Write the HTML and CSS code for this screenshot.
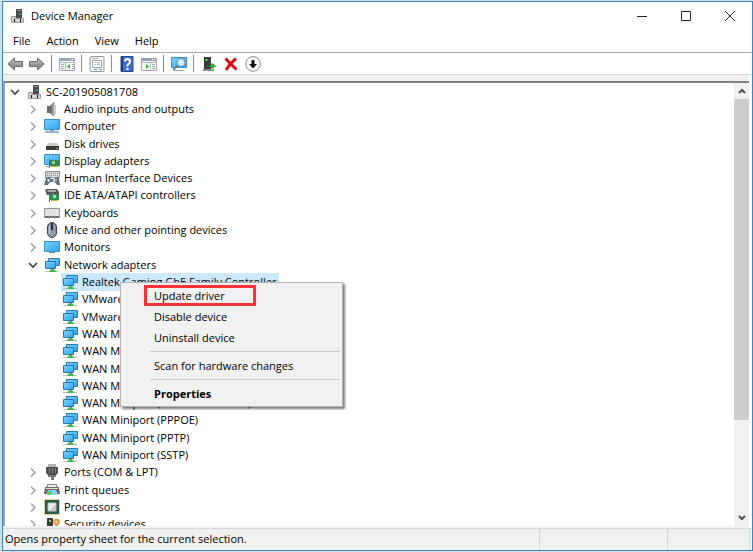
FILE: index.html
```
<!DOCTYPE html>
<html lang="en">
<head>
    <meta charset="UTF-8">
    <meta name="viewport" content="width=device-width, initial-scale=1.0">
    <title>Device Manager</title>
    <link rel="stylesheet" href="styles.css">
</head>
<body>
    <!-- Icon set -->
    <svg class="icon-set" aria-hidden="true">
        <defs>
            <linearGradient id="screen" x1="0" y1="0" x2="1" y2="1">
                <stop offset="0" stop-color="#7fd0ff"/>
                <stop offset="1" stop-color="#2ba3f0"/>
            </linearGradient>
            <linearGradient id="metal" x1="0" y1="0" x2="1" y2="0">
                <stop offset="0" stop-color="#555"/>
                <stop offset="1" stop-color="#bbb"/>
            </linearGradient>
        </defs>
        <symbol id="i-pc" viewBox="0 0 16 16">
            <path d="M7 1h6v9H7z" fill="#4a4a4a"/>
            <path d="M8 2h4v1H8z" fill="#999"/>
            <path d="M10 5h2v2h-2z" fill="#3a9a58"/>
            <path d="M2.500 8.500h4v2h8v4h-12z" fill="#d4d4d4" stroke="#9a9a9a"/>
            <path d="M5 11h1v3H5zM11 11h1v3h-1z" fill="#111"/>
        </symbol>
        <symbol id="i-audio" viewBox="0 0 16 16">
            <path d="M3 5h3v7H3z" fill="#666"/>
            <path d="M6 5l4-4v14l-4-3z" fill="url(#metal)" stroke="#777" stroke-width=".6"/>
            <path d="M11.500 4v9" stroke="#c8c8c8" fill="none"/>
        </symbol>
        <symbol id="i-computer" viewBox="0 0 16 16">
            <path d="M.5 1.500h15v10H.5z" fill="url(#screen)" stroke="#3a8fc8"/>
            <path d="M6 12h4v1H6z" fill="#999"/>
            <path d="M1 13h14v2H1z" fill="#8fb4cf"/>
        </symbol>
        <symbol id="i-disk" viewBox="0 0 16 16">
            <path d="M4 7h9l2 3H2z" fill="#c9c9c9"/>
            <path d="M2 10h13v4H2z" fill="#3c3c3c"/>
            <path d="M12 12h2v1h-2z" fill="#5fdc5f"/>
        </symbol>
        <symbol id="i-display" viewBox="0 0 16 16">
            <path d="M.5 1.500h15v10H.5z" fill="url(#screen)" stroke="#3a8fc8"/>
            <path d="M2 13h3v1H2z" fill="#999"/>
            <path d="M6 7h10v6H6z" fill="#2f8a4c"/>
            <path d="M8 8h3v3H8z" fill="#9bd0a4"/>
            <path d="M7 13h7v1H7z" fill="#d8a634"/>
            <path d="M5 6h1v9H5z" fill="#666"/>
        </symbol>
        <symbol id="i-hid" viewBox="0 0 16 16">
            <path d="M1.500 1.500h14v6h-14z" fill="#ddd" stroke="#888"/>
            <path d="M3 3.500h11M3 5.500h11" stroke="#888" stroke-dasharray="1 1"/>
            <path d="M2 8l3-1 2 2h3l2-2 3 1 1 7h-3l-2-3H6l-2 3H0z" fill="#666f78"/>
            <path d="M3 10h3M4.500 9v3M11 10h2" stroke="#e8eef4"/>
            <path d="M9 7h2v6H9z" fill="#b4cce0"/>
        </symbol>
        <symbol id="i-ide" viewBox="0 0 16 16">
            <path d="M1 3l2-1h10l2 3v3H3z" fill="#555"/>
            <path d="M3 3h9v2H4z" fill="#aaa"/>
            <path d="M6 7h9v6H6z" fill="#2d9150"/>
            <path d="M9 8h3v3H9z" fill="#a7d9b2"/>
            <path d="M7 13h7v1H7z" fill="#d6a83c"/>
            <path d="M5.500 6v9" stroke="#666"/>
        </symbol>
        <symbol id="i-keyboard" viewBox="0 0 16 16">
            <path d="M.5 3.500h15v9H.5z" fill="#dcdcdc" stroke="#999"/>
            <path d="M2 5.500h12M3 7.500h11M2 9.500h12" stroke="#f8f8f8" stroke-dasharray="1 1"/>
            <path d="M1 11h14v2H1z" fill="#777"/>
        </symbol>
        <symbol id="i-mouse" viewBox="0 0 16 16">
            <rect x="3.500" y=".5" width="9" height="15" rx="4.500" fill="#8b98a6" stroke="#3d4650"/>
            <path d="M8 1v7" stroke="#333" stroke-width="2"/>
            <path d="M5.500 4v8" stroke="#c7d2dc"/>
        </symbol>
        <symbol id="i-monitor" viewBox="0 0 16 16">
            <path d="M.5 2.500h15v10H.5z" fill="url(#screen)" stroke="#3a8fc8"/>
            <path d="M5 13h6v1H5z" fill="#888"/>
        </symbol>
        <symbol id="i-network" viewBox="0 0 16 16">
            <path d="M4.500 1.500h11v7h-11z" fill="url(#screen)" stroke="#2a78ad"/>
            <path d="M1.500 4.500h10v7h-10z" fill="url(#screen)" stroke="#2a78ad"/>
            <path d="M1 14h14v1H1z" fill="#c4c4c4"/>
            <path d="M7 12h3v1h1l1 2H5l1-2h1z" fill="#3dbb46"/>
        </symbol>
        <symbol id="i-port" viewBox="0 0 16 16">
            <path d="M4 0h8v3H4z" fill="#b5b5b5"/>
            <path d="M2 3h12v6l-2 2H4L2 9z" fill="#4a4a4a"/>
            <path d="M5.500 4v5M8.500 4v5M11.500 4v5" stroke="#888"/>
            <path d="M4 11h8v2H4z" fill="#777"/>
            <path d="M7 13h3v3H7z" fill="#777"/>
        </symbol>
        <symbol id="i-printer" viewBox="0 0 16 16">
            <path d="M3.500 2.500h9v3h-9z" fill="#eee" stroke="#888"/>
            <path d="M1 5h14l1 7h-3v-2H3v2H0z" fill="#6a6a6a"/>
            <path d="M4 8h8l1 5H3z" fill="#7fd6f5"/>
            <path d="M4 9h4l-1 4H3z" fill="#59c75d"/>
            <path d="M2 6h12v1H2z" fill="#ddd"/>
        </symbol>
        <symbol id="i-cpu" viewBox="0 0 16 16">
            <path d="M1 1h14v14H1z" fill="#2c5a45"/>
            <path d="M.5 .5h15v15H.5z" fill="none" stroke="#b59a52" stroke-dasharray="1 1"/>
            <path d="M4 4h8v8H4z" fill="#eee" stroke="#b8c4bc"/>
            <path d="M12 5v7H5z" fill="#c7c7c7"/>
        </symbol>
        <symbol id="i-security" viewBox="0 0 16 16">
            <path d="M3 2h6v13H3z" fill="#3c3c3c"/>
            <path d="M5 4h2v2H5z" fill="#6fe070"/>
            <circle cx="12.500" cy="6" r="2.500" fill="#f5d09c" stroke="#d78f36" stroke-width="1.500"/>
            <path d="M11.500 9h2v6h-2z" fill="#d78f36"/>
        </symbol>
        <symbol id="i-back" viewBox="0 0 16 16">
            <path d="M.8 8l6.700-6v3.500h8v5h-8V14z" fill="#969696" stroke="#6c6c6c"/>
            <path d="M3 7.500l3.500-3v2.500h8" fill="none" stroke="#b8b8b8"/>
        </symbol>
        <symbol id="i-forward" viewBox="0 0 16 16">
            <path d="M15.200 8L8.500 2v3.500h-8v5h8V14z" fill="#969696" stroke="#6c6c6c"/>
            <path d="M1.500 7h8V4.500l3.500 3" fill="none" stroke="#b8b8b8"/>
        </symbol>
        <symbol id="i-tree" viewBox="0 0 16 16">
            <path d="M.5 2.500h15v12H.5z" fill="#f7f7f7" stroke="#a4a8ac"/>
            <path d="M1 2h14v3H1z" fill="#98a2ae"/>
            <path d="M11 3.500h1M13 3.500h1" stroke="#fff"/>
            <path d="M1 6.500h14M6.500 7v7" stroke="#b0b6bc"/>
            <path d="M2 8.500h3M2 10.500h3M2 12.500h3M13 8.500h2M13 10.500h2M13 12.500h2" stroke="#9caabc"/>
            <path d="M11 8v5L8 10.500z" fill="#28b030"/>
        </symbol>
        <symbol id="i-sheet" viewBox="0 0 16 16">
            <rect x="1" y=".5" width="14" height="15" rx="1" fill="#f2f2f2" stroke="#999"/>
            <path d="M3.500 4.500h9v7h-9z" fill="#fff" stroke="#a4a4a4"/>
            <path d="M5 6.500h2M8 6.500h3M5 8.500h2M8 8.500h3M3 2.500h7" stroke="#b0b6c0"/>
            <path d="M5 13.500h3" stroke="#56a9dc"/>
            <path d="M10 13.500h3" stroke="#999"/>
        </symbol>
        <symbol id="i-help" viewBox="0 0 16 16">
            <path d="M2 .5h12v15H2z" fill="#3f6fca" stroke="#23468f"/>
            <path d="M2 1h2v14H2z" fill="#203f88"/>
            <path d="M6 5.500Q6 3 8.500 3T11 5.500Q11 7 9.500 8T8.500 10.500M8.500 12v2" fill="none" stroke="#fff" stroke-width="2"/>
        </symbol>
        <symbol id="i-run" viewBox="0 0 16 16">
            <path d="M.5 2.500h15v12H.5z" fill="#f7f7f7" stroke="#a4a8ac"/>
            <path d="M1 2h14v3H1z" fill="#98a2ae"/>
            <path d="M11 3.500h1M13 3.500h1" stroke="#fff"/>
            <path d="M1 6.500h14M9.500 7v7" stroke="#b0b6bc"/>
            <path d="M11 8.500h3M11 10.500h3M11 12.500h3" stroke="#9caabc"/>
            <path d="M5 8v5l3-2.500z" fill="#28b030"/>
        </symbol>
        <symbol id="i-scan" viewBox="0 0 16 16">
            <path d="M.5 1.500h15v10H.5z" fill="url(#screen)" stroke="#3a8fc8"/>
            <path d="M3 14.500h9" stroke="#999"/>
            <circle cx="10" cy="6.500" r="4" fill="#cfeefd" stroke="#6d90a8"/>
            <path d="M7 9.500L2 14" stroke="#66869c" stroke-width="1.700"/>
        </symbol>
        <symbol id="i-update" viewBox="0 0 16 16">
            <path d="M3 1h7v12H3z" fill="#3b3b3b"/>
            <path d="M4.500 3h2v2h-2z" fill="#54d65a"/>
            <path d="M2 13h8v2H2z" fill="#888"/>
            <path d="M11.500 7l4 4H13v1h-3v-1H7.500z" fill="#23b52c"/>
            <path d="M10 12.500h3v1h-3zM10 14h3v1h-3z" fill="#23b52c"/>
        </symbol>
        <symbol id="i-remove" viewBox="0 0 16 16">
            <path d="M2.500 2.500q5 5.500 11 11M13 2.500Q7 7.500 3 14" fill="none" stroke="#dc0c12" stroke-width="3"/>
        </symbol>
        <symbol id="i-down" viewBox="0 0 16 16">
            <circle cx="8" cy="8" r="7.300" fill="#fff" stroke="#888"/>
            <path d="M6.500 4h3v4H12l-4 4.500L4 8h2.500z" fill="#111"/>
        </symbol>
        <symbol id="i-closed" viewBox="0 0 16 16">
            <path d="M6 4.500l4 4-4 4" fill="none" stroke="#a0a0a0" stroke-width="1.500"/>
        </symbol>
        <symbol id="i-open" viewBox="0 0 16 16">
            <path d="M4 6l4 4 4-4" fill="none" stroke="#404040" stroke-width="1.700"/>
        </symbol>
    </svg>

    <div class="window">
        <header class="title-bar">
            <svg class="icon"><use href="#i-pc"/></svg>
            <h1>Device Manager</h1>
            <div class="window-buttons">
                <button aria-label="Minimize"><svg viewBox="0 0 12 12"><path d="M1 6.500h10"/></svg></button>
                <button aria-label="Maximize"><svg viewBox="0 0 12 12"><path d="M1.500 1.500h9v9h-9z"/></svg></button>
                <button aria-label="Close"><svg viewBox="0 0 12 12"><path d="M1 1l10 10M11 1L1 11"/></svg></button>
            </div>
        </header>

        <nav class="menu-bar">
            <button>File</button>
            <button>Action</button>
            <button>View</button>
            <button>Help</button>
        </nav>

        <div class="toolbar">
            <button aria-label="Back"><svg class="icon"><use href="#i-back"/></svg></button>
            <button aria-label="Forward"><svg class="icon"><use href="#i-forward"/></svg></button>
            <span class="divider"></span>
            <button aria-label="Show console tree"><svg class="icon"><use href="#i-tree"/></svg></button>
            <span class="divider"></span>
            <button aria-label="Properties"><svg class="icon"><use href="#i-sheet"/></svg></button>
            <span class="divider"></span>
            <button aria-label="Help"><svg class="icon"><use href="#i-help"/></svg></button>
            <button aria-label="Show action pane"><svg class="icon"><use href="#i-run"/></svg></button>
            <span class="divider"></span>
            <button aria-label="Scan for hardware changes"><svg class="icon"><use href="#i-scan"/></svg></button>
            <span class="divider"></span>
            <button aria-label="Update driver"><svg class="icon"><use href="#i-update"/></svg></button>
            <button aria-label="Uninstall device"><svg class="icon"><use href="#i-remove"/></svg></button>
            <button aria-label="Disable device"><svg class="icon"><use href="#i-down"/></svg></button>
        </div>

        <main class="content">
            <ul class="tree">
                <li class="root"><button class="toggle" aria-label="Collapse"><svg class="icon"><use href="#i-open"/></svg></button><svg class="icon"><use href="#i-pc"/></svg><span>SC-201905081708</span></li>
                <li class="group"><button class="toggle" aria-label="Expand"><svg class="icon"><use href="#i-closed"/></svg></button><svg class="icon"><use href="#i-audio"/></svg><span>Audio inputs and outputs</span></li>
                <li class="group"><button class="toggle" aria-label="Expand"><svg class="icon"><use href="#i-closed"/></svg></button><svg class="icon"><use href="#i-computer"/></svg><span>Computer</span></li>
                <li class="group"><button class="toggle" aria-label="Expand"><svg class="icon"><use href="#i-closed"/></svg></button><svg class="icon"><use href="#i-disk"/></svg><span>Disk drives</span></li>
                <li class="group"><button class="toggle" aria-label="Expand"><svg class="icon"><use href="#i-closed"/></svg></button><svg class="icon"><use href="#i-display"/></svg><span>Display adapters</span></li>
                <li class="group"><button class="toggle" aria-label="Expand"><svg class="icon"><use href="#i-closed"/></svg></button><svg class="icon"><use href="#i-hid"/></svg><span>Human Interface Devices</span></li>
                <li class="group"><button class="toggle" aria-label="Expand"><svg class="icon"><use href="#i-closed"/></svg></button><svg class="icon"><use href="#i-ide"/></svg><span>IDE ATA/ATAPI controllers</span></li>
                <li class="group"><button class="toggle" aria-label="Expand"><svg class="icon"><use href="#i-closed"/></svg></button><svg class="icon"><use href="#i-keyboard"/></svg><span>Keyboards</span></li>
                <li class="group"><button class="toggle" aria-label="Expand"><svg class="icon"><use href="#i-closed"/></svg></button><svg class="icon"><use href="#i-mouse"/></svg><span>Mice and other pointing devices</span></li>
                <li class="group"><button class="toggle" aria-label="Expand"><svg class="icon"><use href="#i-closed"/></svg></button><svg class="icon"><use href="#i-monitor"/></svg><span>Monitors</span></li>
                <li class="group"><button class="toggle" aria-label="Collapse"><svg class="icon"><use href="#i-open"/></svg></button><svg class="icon"><use href="#i-network"/></svg><span>Network adapters</span></li>
                <li class="device selected"><svg class="icon"><use href="#i-network"/></svg><span>Realtek Gaming GbE Family Controller</span>
                    <!-- Context menu of the selected adapter -->
                    <div class="context-menu">
                        <button class="highlight">Update driver</button>
                        <button>Disable device</button>
                        <button>Uninstall device</button>
                        <hr>
                        <button>Scan for hardware changes</button>
                        <hr>
                        <button class="default">Properties</button>
                    </div>
                </li>
                <li class="device"><svg class="icon"><use href="#i-network"/></svg><span>VMware</span></li>
                <li class="device"><svg class="icon"><use href="#i-network"/></svg><span>VMware</span></li>
                <li class="device"><svg class="icon"><use href="#i-network"/></svg><span>WAN Miniport</span></li>
                <li class="device"><svg class="icon"><use href="#i-network"/></svg><span>WAN Miniport</span></li>
                <li class="device"><svg class="icon"><use href="#i-network"/></svg><span>WAN Miniport</span></li>
                <li class="device"><svg class="icon"><use href="#i-network"/></svg><span>WAN Miniport</span></li>
                <li class="device"><svg class="icon"><use href="#i-network"/></svg><span>WAN Miniport (Network Monitor)</span></li>
                <li class="device"><svg class="icon"><use href="#i-network"/></svg><span>WAN Miniport (PPPOE)</span></li>
                <li class="device"><svg class="icon"><use href="#i-network"/></svg><span>WAN Miniport (PPTP)</span></li>
                <li class="device"><svg class="icon"><use href="#i-network"/></svg><span>WAN Miniport (SSTP)</span></li>
                <li class="group"><button class="toggle" aria-label="Expand"><svg class="icon"><use href="#i-closed"/></svg></button><svg class="icon"><use href="#i-port"/></svg><span>Ports (COM &amp; LPT)</span></li>
                <li class="group"><button class="toggle" aria-label="Expand"><svg class="icon"><use href="#i-closed"/></svg></button><svg class="icon"><use href="#i-printer"/></svg><span>Print queues</span></li>
                <li class="group"><button class="toggle" aria-label="Expand"><svg class="icon"><use href="#i-closed"/></svg></button><svg class="icon"><use href="#i-cpu"/></svg><span>Processors</span></li>
                <li class="group"><button class="toggle" aria-label="Expand"><svg class="icon"><use href="#i-closed"/></svg></button><svg class="icon"><use href="#i-security"/></svg><span>Security devices</span></li>
            </ul>
            <div class="scrollbar">
                <button aria-label="Scroll up"><svg viewBox="0 0 8 8"><path d="M1 6l3-3 3 3"/></svg></button>
                <div class="track"><div class="thumb"></div></div>
                <button aria-label="Scroll down"><svg viewBox="0 0 8 8"><path d="M1 2l3 3 3-3"/></svg></button>
            </div>
        </main>

        <footer class="status-bar">
            <span>Opens property sheet for the current selection.</span>
            <span></span>
            <span></span>
        </footer>
    </div>
</body>
</html>
```
FILE: styles.css
```
* {
    box-sizing: border-box;
}

body {
    height: 100vh;
    margin: 0;
    padding: 1px 0 1px 2px;
    background-color: #dcdcd8;
    font-family: "Open Sans", "Noto Sans", sans-serif;
    font-size: 11px;
    line-height: 16px;
    color: #000;
}

button {
    padding: 0;
    border: none;
    background: none;
    font: inherit;
    color: inherit;
}

.icon-set {
    position: absolute;
    width: 0;
    height: 0;
}

.icon {
    flex: none;
    display: block;
    width: 16px;
    height: 16px;
}

.window {
    display: flex;
    flex-direction: column;
    height: 100%;
    border: 1px solid #2f8ad0;
    background-color: #fff;
}

/* Title bar */
.title-bar {
    display: flex;
    align-items: center;
    height: 28px;
    padding-left: 6px;
}

.title-bar h1 {
    flex: 1;
    margin: 0 0 0 6px;
    font-size: 11px;
    font-weight: normal;
}

.window-buttons {
    display: flex;
}

.window-buttons button {
    display: flex;
    justify-content: center;
    width: 44px;
}

.window-buttons svg {
    width: 12px;
    height: 12px;
    fill: none;
    stroke: #222;
}

/* Menu bar */
.menu-bar {
    display: flex;
    gap: 16px;
    height: 23px;
    padding: 0 10px;
    border-bottom: 1px solid #a8a8a8;
}

/* Toolbar */
.toolbar {
    display: flex;
    align-items: center;
    gap: 6px;
    height: 22px;
    padding-left: 4px;
    border-bottom: 1px solid #d4d4d4;
}

.divider {
    width: 1px;
    height: 17px;
    margin-right: 1px;
    background-color: #8a8a8a;
}

/* Device tree */
.content {
    flex: 1;
    display: flex;
    min-height: 0;
    margin-right: 3px;
    border-top: 6px solid #f0f0f0;
    border-bottom: 2px solid #f0f0f0;
    overflow: hidden;
}

/* the last row runs under the lower edge */
.tree {
    flex: 1;
    display: grid;
    grid-auto-rows: minmax(17px, 1fr);
    margin: 0 0 -7px;
    padding: 0;
    border-top: 2px solid #828282;
    border-left: 2px solid #a0a0a0;
    list-style: none;
}

.tree li {
    display: flex;
    align-items: center;
    gap: 3px;
    white-space: nowrap;
}

.tree span {
    padding: 0 3px 0 1px;
}

.tree .root {
    padding-left: 2px;
}

.tree .group {
    padding-left: 20px;
}

.tree .device {
    position: relative;
    justify-self: start;
    margin-left: 56px;
    padding-left: 1px;
}

.tree .selected {
    background-color: #cce8ff;
}

/* Context menu */
.context-menu {
    position: absolute;
    top: 9px;
    left: 59px;
    z-index: 1;
    display: flex;
    flex-direction: column;
    width: 223px;
    padding: 2px;
    border: 1px solid #b4b4b4;
    background-color: #f1f1f1;
    box-shadow: 2px 2px 2px rgba(0, 0, 0, 0.5);
}

.context-menu button {
    height: 21px;
    padding-left: 31px;
    text-align: left;
}

.context-menu hr {
    width: 190px;
    height: 1px;
    margin: 3px 0 3px auto;
    border: none;
    background-color: #c8c8c8;
}

.context-menu .highlight {
    width: 112px;
    margin-left: 21px;
    padding-left: 7px;
    border: 3px solid #fa3237;
    line-height: 15px;
}

.context-menu .default {
    font-weight: bold;
}

/* Scrollbar */
.scrollbar {
    display: flex;
    flex-direction: column;
    width: 15px;
    border-top: 2px solid #828282;
    background-color: #f0f0f0;
}

.scrollbar button {
    display: flex;
    align-items: center;
    justify-content: center;
    height: 16px;
}

.scrollbar svg {
    width: 8px;
    height: 8px;
    fill: none;
    stroke: #505050;
    stroke-width: 2;
}

.track {
    flex: 1;
}

.thumb {
    height: 78%;
    background-color: #cdcdcd;
}

/* Status bar */
.status-bar {
    display: grid;
    grid-template-columns: 1fr 128px 82px;
    height: 22px;
    padding-right: 2px;
    border-top: 1px solid #d8d8d8;
    background-color: #f0f0f0;
}

.status-bar span {
    padding: 2px;
    border-right: 1px solid #d4d4d4;
}
```
